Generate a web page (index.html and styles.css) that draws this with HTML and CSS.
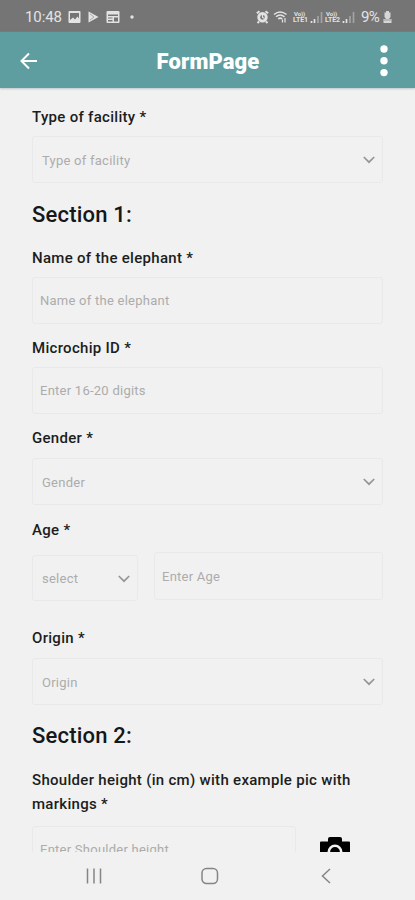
FILE: index.html
```html
<!DOCTYPE html>
<html lang="en">
<head>
<meta charset="utf-8">
<title>FormPage</title>
<link rel="stylesheet" href="styles.css">
</head>
<body>
<div class="screen">
  <div class="status">
    <span class="time">10:48</span>
    <svg class="status-left" width="70" height="14" viewBox="0 0 70 14" fill="#e3e3e3">
      <path fill-rule="evenodd" d="M1.500 1h10a1 1 0 0 1 1 1v10a1 1 0 0 1-1 1h-10a1 1 0 0 1-1-1V2a1 1 0 0 1 1-1zM2 3v7l3-2.500 2 2 2.500-3 1.500 2V3z"/>
      <path d="M20.500 1.500l10 5.500-10 5.500z"/><path d="M22 4l4 3-4 3" fill="none" stroke="#aaa" stroke-width="1"/>
      <path fill-rule="evenodd" d="M39.500 1h11a1 1 0 0 1 1 1v10a1 1 0 0 1-1 1h-11a1 1 0 0 1-1-1V2a1 1 0 0 1 1-1zM40 4.500v1.500h10V4.500zM40 7.500v1h4.500v-1zM46 7.500v4h4v-4zM40 10v1.500h4.500V10z"/>
      <circle cx="64" cy="7" r="1.700"/>
    </svg>
    <svg class="status-right" width="31" height="14" viewBox="0 0 31 14" fill="none" stroke="#e3e3e3">
      <circle cx="6.500" cy="7.300" r="3.800" stroke-width="2.800"/>
      <path d="M.8 3.300l2.700-2M12.200 3.300l-2.700-2M3 11.500l-1.500 1.500M10 11.500l1.500 1.500" stroke-width="2"/>
      <path d="M6.500 5v2.500l2 1" stroke-width="1.200"/>
      <path d="M18 4.500q6-5 12.500 0M20 6.800q4-3.400 8.500 0M22.200 9q2-1.700 4 0" stroke-width="1.500"/>
      <path d="M26.500 12.500V9.500M29 12.500V8" stroke-width="1.200"/>
    </svg>
    <span class="lte"><span class="volte">Vo))</span><span>LTE1</span></span>
    <svg class="bars" width="13" height="13" viewBox="0 0 13 13"><path d="M1.500 12v-2M4.500 12V8" stroke="#e3e3e3" stroke-width="1.700"/><path d="M8 12V5M11.500 12V1" stroke="#a3a3a3" stroke-width="1.700"/></svg>
    <span class="lte"><span class="volte">Vo))</span><span>LTE2</span></span>
    <svg class="bars" width="13" height="13" viewBox="0 0 13 13"><path d="M1.500 12v-2M4.500 12V8" stroke="#e3e3e3" stroke-width="1.700"/><path d="M8 12V5M11.500 12V1" stroke="#a3a3a3" stroke-width="1.700"/></svg>
    <span class="percent">9%</span>
    <svg class="battery" width="9" height="14" viewBox="0 0 9 14"><path d="M3 1h3v1.500h1.500V7L6 9h2.500v4H.5V9H3L1.500 7V2.500H3z" fill="#d6d6d6"/><path d="M1 10h7" stroke="#999"/></svg>
  </div>
  <header class="appbar">
    <svg class="back" width="18" height="18" viewBox="0 0 18 18" fill="none" stroke="#fff" stroke-width="2"><path d="M17 9H2M9 1.500L1.500 9 9 16.500"/></svg>
    <h1>FormPage</h1>
    <svg class="more" width="8" height="32" viewBox="0 0 8 32" fill="#fff"><circle cx="4" cy="4" r="3.700"/><circle cx="4" cy="15.800" r="3.700"/><circle cx="4" cy="27.600" r="3.700"/></svg>
  </header>
  <main class="form">
    <div class="label">Type of facility *</div>
    <div class="field select"><span>Type of facility</span><svg class="chevron" viewBox="0 0 12 8"><path d="M.8 1l5.200 5.200L11.200 1"/></svg></div>
    <h2>Section 1:</h2>
    <div class="label">Name of the elephant *</div>
    <div class="field"><span>Name of the elephant</span></div>
    <div class="label next">Microchip ID *</div>
    <div class="field"><span>Enter 16-20 digits</span></div>
    <div class="label next">Gender *</div>
    <div class="field select low"><span>Gender</span><svg class="chevron" viewBox="0 0 12 8"><path d="M.8 1l5.200 5.200L11.200 1"/></svg></div>
    <div class="label age">Age *</div>
    <div class="row">
      <div class="field select unit"><span>select</span><svg class="chevron" viewBox="0 0 12 8"><path d="M.8 1l5.200 5.200L11.200 1"/></svg></div>
      <div class="field years"><span>Enter Age</span></div>
    </div>
    <div class="label origin">Origin *</div>
    <div class="field select low"><span>Origin</span><svg class="chevron" viewBox="0 0 12 8"><path d="M.8 1l5.200 5.200L11.200 1"/></svg></div>
    <h2 class="second">Section 2:</h2>
    <div class="label shoulder">Shoulder height (in cm) with example pic with<br>markings *</div>
    <div class="row measure">
      <div class="field height"><span>Enter Shoulder height</span></div>
      <svg class="camera" width="30" height="28" viewBox="0 0 30 28"><path d="M1 4.500h7V2q0-2 2-2h10q2 0 2 2v2.500h7q1 0 1 1V26H0V5.500q0-1 1-1z"/><circle cx="15" cy="15" r="6.200" fill="none" stroke="#f1f1f1" stroke-width="2.600"/></svg>
    </div>
  </main>
  <nav class="navbar">
    <svg width="16" height="16" viewBox="0 0 16 16"><path d="M1.500 .5v15M8 .5v15M14.500 .5v15"/></svg>
    <svg width="18" height="18" viewBox="0 0 18 18"><rect x="1" y="1.500" width="15.500" height="15" rx="4.500"/></svg>
    <svg width="10" height="16" viewBox="0 0 10 16"><path d="M9 1L1.500 8 9 15"/></svg>
  </nav>
</div>
</body>
</html>
```
FILE: styles.css
```css
* { box-sizing: border-box; }
body { margin: 0; background: #f1f1f1; font-family: Roboto, sans-serif; }
.screen { width: 415px; height: 900px; display: flex; flex-direction: column; overflow: hidden; }
.status { height: 32px; flex: none; background: #757575; color: #e3e3e3; display: flex; align-items: center; padding: 2px 23px 0 25px; }
.time { font-size: 15px; width: 43px; letter-spacing: -.1px; }
.status-right { margin-left: auto; margin-right: 6px; flex: none; }
.lte { display: flex; flex-direction: column; font-size: 7px; font-weight: 700; line-height: 7px; width: 17px; white-space: nowrap; letter-spacing: -.1px; }
.volte { font-size: 6px; padding-left: 1px; }
.bars { flex: none; margin-right: 2px; }
.percent { font-size: 15px; margin-left: 4px; width: 22px; letter-spacing: -.7px; }
.battery { flex: none; }
.appbar { height: 56px; flex: none; background: #5f9ea0; color: #fff; display: grid; grid-template-columns: 60px 1fr 60px; align-items: center; padding: 2px 0 0; box-shadow: 0 1px 2px #b9c7c7; z-index: 1; }
.back { margin-left: 20px; }
.appbar h1 { margin: 2px 0 0 1px; font-size: 22px; line-height: 28px; font-weight: 900; text-align: center; letter-spacing: .1px; }
.more { justify-self: end; margin-right: 27px; }
.form { flex: 1; min-height: 0; padding: 17px 32px 0; overflow: hidden; }
.label { font-size: 15px; line-height: 24px; font-weight: 500; color: #1b1d20; letter-spacing: .3px; white-space: nowrap; margin-bottom: 7px; }
.field { height: 47px; border: 1px solid #e9e9e9; border-radius: 3px; color: #acacac; font-size: 13px; display: flex; align-items: center; padding: 0 7px; letter-spacing: .25px; white-space: nowrap; }
.select { padding: 1px 7px 0 9px; justify-content: space-between; }
.chevron { width: 12px; height: 8px; flex: none; fill: none; stroke: #969696; stroke-width: 1.7; }
.form h2 { margin: 18px 0 17px; font-size: 22px; line-height: 28px; font-weight: 500; color: #151719; letter-spacing: .2px; }
.next { margin-top: 12px; }
.low { margin-top: 8px; }
.age { margin-top: 13px; margin-bottom: 10px; }
.row { display: flex; align-items: flex-start; }
.unit { width: 106px; height: 46px; margin-top: 3px; margin-right: 16px; }
.years { flex: 1; height: 48px; padding-top: 1px; }
.origin { margin-top: 25px; }
.form .second { margin-bottom: 18px; margin-top: 17px; }
.shoulder { margin-bottom: 10px; }
.height { width: 264px; flex: none; height: 47px; }
.camera { margin: 11px 0 0 24px; flex: none; }
.navbar { height: 48px; flex: none; display: grid; grid-template-columns: 186px 46px 186px; justify-content: center; align-items: center; justify-items: center; padding-left: 4px; }
.navbar svg { fill: none; stroke: #858585; stroke-width: 1.5; }
```
